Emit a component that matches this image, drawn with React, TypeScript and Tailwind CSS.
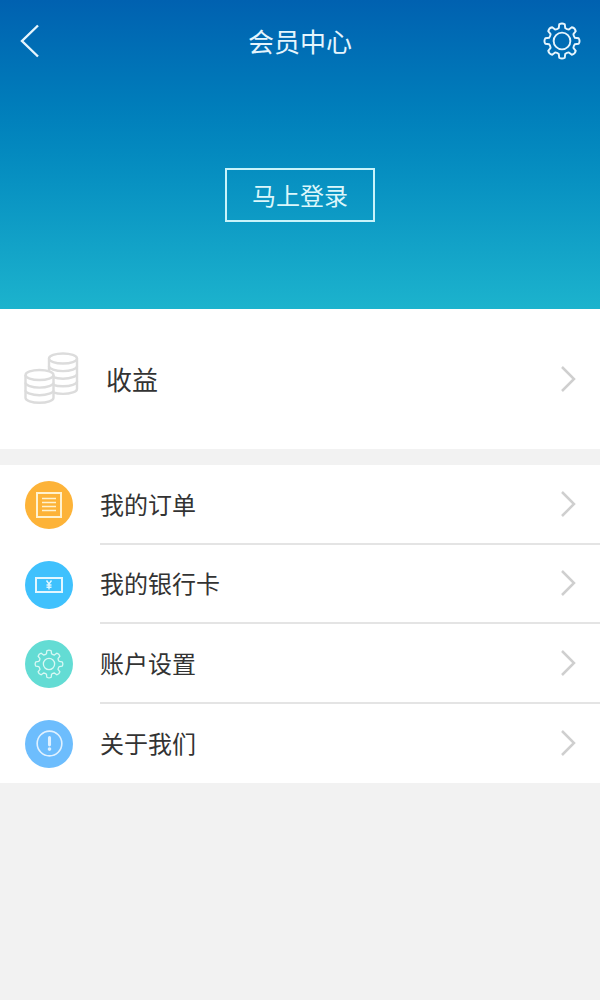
const font = { fontFamily: '"Noto Sans CJK SC", sans-serif' };

function gearPath() {
  const pt = (r: number, deg: number) => {
    const a = ((deg - 90) * Math.PI) / 180;
    return `${(20 + r * Math.cos(a)).toFixed(2)} ${(20 + r * Math.sin(a)).toFixed(2)}`;
  };
  const R = 17.8;
  const r = 14;
  let d = "";
  for (let i = 0; i < 8; i++) {
    const c = i * 45;
    d += `${i === 0 ? "M" : "L"}${pt(r, c - 14)} L${pt(R, c - 9.5)} Q${pt(R + 1.6, c)} ${pt(R, c + 9.5)} L${pt(r, c + 14)} `;
    d += `Q${pt(r - 0.8, c + 22.5)} ${pt(r, c + 31)} `;
  }
  return d + "Z";
}

function Gear({ size, stroke, width, inner }: { size: number; stroke: string; width: number; inner: number }) {
  return (
    <svg width={size} height={size} viewBox="0 0 40 40" fill="none" stroke={stroke} strokeWidth={width} strokeLinejoin="round">
      <path d={gearPath()} />
      <circle cx="20" cy="20" r={inner} />
    </svg>
  );
}

function Chevron() {
  return (
    <svg width="16" height="28" viewBox="0 0 16 28" fill="none" className="shrink-0">
      <path d="M2 2 L14 14 L2 26" stroke="#cfcfcf" strokeWidth="2.5" />
    </svg>
  );
}

function Coins() {
  const stack = (x: number, top: number, n: number) => {
    const rx = 14;
    const ry = 5;
    const h = 7.6;
    const items = [];
    for (let i = n - 1; i >= 0; i--) {
      const y = top + i * h;
      items.push(
        <path
          key={i}
          d={`M${x - rx} ${y} v${h} a${rx} ${ry} 0 0 0 ${rx * 2} 0 v-${h}`}
          fill="#fff"
          stroke="#dcdcdc"
          strokeWidth="2.4"
        />
      );
    }
    items.push(<ellipse key="t" cx={x} cy={top} rx={rx} ry={ry} fill="#fff" stroke="#dcdcdc" strokeWidth="2.4" />);
    return items;
  };
  return (
    <svg width="56" height="54" viewBox="0 0 56 54" fill="none" className="shrink-0">
      {stack(39, 6.5, 4)}
      {stack(15.5, 23, 3)}
    </svg>
  );
}

function DocIcon() {
  return (
    <svg width="26" height="26" viewBox="0 0 26 26" fill="none" stroke="#fff2cf">
      <rect x="1" y="1" width="24" height="24" strokeWidth="2" />
      <path d="M6 6.5H20M6 10.5H20M6 14.5H20M6 18.5H20" strokeWidth="1.6" />
    </svg>
  );
}

function CardIcon() {
  return (
    <svg width="28" height="16" viewBox="0 0 28 16" fill="none" stroke="#e2f7ff">
      <rect x="1" y="1" width="26" height="14" strokeWidth="2" />
      <path d="M11.5 3.5L14 7L16.5 3.5M14 7V12.5M11.5 8H16.5M11.5 10.2H16.5" strokeWidth="1.4" />
    </svg>
  );
}

function AlertIcon() {
  return (
    <svg width="27" height="27" viewBox="0 0 30 30" fill="none">
      <circle cx="15" cy="15" r="13.7" stroke="#e0f1ff" strokeWidth="1.8" />
      <path d="M15 8.5V16.5" stroke="#e0f1ff" strokeWidth="3.4" strokeLinecap="round" />
      <circle cx="15" cy="21.2" r="2" fill="#e0f1ff" />
    </svg>
  );
}

const rows = [
  { label: "我的订单", bg: "bg-[#fdb338]", icon: <DocIcon /> },
  { label: "我的银行卡", bg: "bg-[#3fc1fd]", icon: <CardIcon /> },
  { label: "账户设置", bg: "bg-[#63dcd4]", icon: <Gear size={30} stroke="#d9f8f4" width={1.7} inner={7.5} /> },
  { label: "关于我们", bg: "bg-[#6dbdfd]", icon: <AlertIcon /> },
];

export default function App() {
  return (
    <div style={font} className="flex h-[1000px] w-[600px] flex-col bg-[#f2f2f2]">
      <header className="flex h-[309px] flex-col bg-gradient-to-b from-[#0061b0] to-[#1cb3cd]">
        <div className="grid h-[82px] grid-cols-[1fr_auto_1fr] items-center px-[19px] text-[#e6f5fd]">
          <svg width="20" height="34" viewBox="0 0 20 34" fill="none" className="ml-[1px]">
            <path d="M18 1.5L2 17L18 32.5" stroke="#e6f5fd" strokeWidth="2.4" />
          </svg>
          <h1 className="text-[26px] leading-none font-normal">会员中心</h1>
          <div className="flex justify-end">
            <Gear size={38} stroke="#e6f5fd" width={2} inner={8.8} />
          </div>
        </div>
        <div className="flex justify-center pt-[86px]">
          <button className="flex h-[54px] w-[150px] items-center justify-center border-2 border-[#c8f3fa] text-[24px] leading-none text-[#dcf7fb]">
            马上登录
          </button>
        </div>
      </header>

      <section className="flex h-[140px] items-center justify-between bg-white px-[24px]">
        <div className="flex items-center gap-[26px]">
          <Coins />
          <span className="text-[26px] leading-none text-[#333]">收益</span>
        </div>
        <Chevron />
      </section>

      <section className="mt-[16px] flex flex-col bg-white">
        {rows.map((r, i) => (
          <div key={r.label} className="flex h-[79.5px] items-center">
            <div className="flex w-[100px] shrink-0 justify-start pl-[25px] pt-[1px]">
              <div className={`flex size-[48px] items-center justify-center rounded-full ${r.bg}`}>{r.icon}</div>
            </div>
            <div
              className={`flex h-full flex-1 items-center justify-between pr-[24px] ${
                i < rows.length - 1 ? "border-b-2 border-[#e4e4e4]" : ""
              }`}
            >
              <span className="text-[24px] leading-none text-[#333]">{r.label}</span>
              <Chevron />
            </div>
          </div>
        ))}
      </section>
    </div>
  );
}
